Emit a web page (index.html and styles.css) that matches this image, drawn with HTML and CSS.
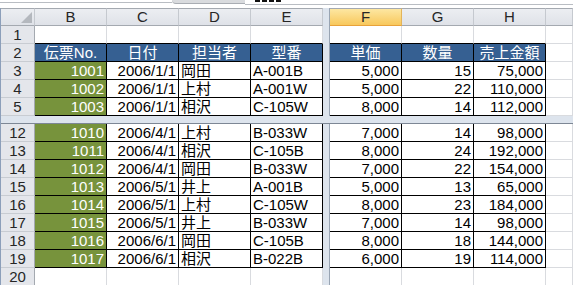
FILE: index.html
```html
<!DOCTYPE html>
<html lang="ja">
<head>
<meta charset="utf-8">
<title>売上表</title>
<link rel="stylesheet" href="styles.css">
</head>
<body>
<div class="fbar">
  <div class="fb-left"></div>
  <div class="fb-fx"></div>
  <div class="fb-input"><span class="mark"></span><span class="mark"></span><span class="mark"></span><span class="mark"></span></div>
</div>
<div class="sheet">
  <div class="vs"></div>
  <div class="hs"></div>

  <div class="ch corner"><span class="tri"></span></div>
  <div class="ch">B</div><div class="ch">C</div><div class="ch">D</div><div class="ch">E</div>
  <div class="ch sel">F</div><div class="ch">G</div><div class="ch">H</div><div class="ch"></div>

  <div class="rh">1</div>
  <div class="c top"></div><div class="c top"></div><div class="c top"></div><div class="c top"></div>
  <div class="c top"></div><div class="c top"></div><div class="c top"></div><div class="c"></div>

  <div class="rh">2</div>
  <div class="c t h">伝票No.</div><div class="c t h">日付</div><div class="c t h">担当者</div><div class="c t h">型番</div>
  <div class="c t h">単価</div><div class="c t h">数量</div><div class="c t h">売上金額</div><div class="c"></div>

  <div class="rh">3</div>
  <div class="c t g">1001</div><div class="c t r">2006/1/1</div><div class="c t">岡田</div><div class="c t">A-001B</div>
  <div class="c t r">5,000</div><div class="c t r">15</div><div class="c t r">75,000</div><div class="c"></div>

  <div class="rh">4</div>
  <div class="c t g">1002</div><div class="c t r">2006/1/1</div><div class="c t">上村</div><div class="c t">A-001W</div>
  <div class="c t r">5,000</div><div class="c t r">22</div><div class="c t r">110,000</div><div class="c"></div>

  <div class="rh">5</div>
  <div class="c t g">1003</div><div class="c t r">2006/1/1</div><div class="c t">相沢</div><div class="c t">C-105W</div>
  <div class="c t r">8,000</div><div class="c t r">14</div><div class="c t r">112,000</div><div class="c"></div>

  <div class="rh">12</div>
  <div class="c t g">1010</div><div class="c t r">2006/4/1</div><div class="c t">上村</div><div class="c t">B-033W</div>
  <div class="c t r">7,000</div><div class="c t r">14</div><div class="c t r">98,000</div><div class="c"></div>

  <div class="rh">13</div>
  <div class="c t g">1011</div><div class="c t r">2006/4/1</div><div class="c t">相沢</div><div class="c t">C-105B</div>
  <div class="c t r">8,000</div><div class="c t r">24</div><div class="c t r">192,000</div><div class="c"></div>

  <div class="rh">14</div>
  <div class="c t g">1012</div><div class="c t r">2006/4/1</div><div class="c t">岡田</div><div class="c t">B-033W</div>
  <div class="c t r">7,000</div><div class="c t r">22</div><div class="c t r">154,000</div><div class="c"></div>

  <div class="rh">15</div>
  <div class="c t g">1013</div><div class="c t r">2006/5/1</div><div class="c t">井上</div><div class="c t">A-001B</div>
  <div class="c t r">5,000</div><div class="c t r">13</div><div class="c t r">65,000</div><div class="c"></div>

  <div class="rh">16</div>
  <div class="c t g">1014</div><div class="c t r">2006/5/1</div><div class="c t">上村</div><div class="c t">C-105W</div>
  <div class="c t r">8,000</div><div class="c t r">23</div><div class="c t r">184,000</div><div class="c"></div>

  <div class="rh">17</div>
  <div class="c t g">1015</div><div class="c t r">2006/5/1</div><div class="c t">井上</div><div class="c t">B-033W</div>
  <div class="c t r">7,000</div><div class="c t r">14</div><div class="c t r">98,000</div><div class="c"></div>

  <div class="rh">18</div>
  <div class="c t g">1016</div><div class="c t r">2006/6/1</div><div class="c t">岡田</div><div class="c t">C-105B</div>
  <div class="c t r">8,000</div><div class="c t r">18</div><div class="c t r">144,000</div><div class="c"></div>

  <div class="rh">19</div>
  <div class="c t g">1017</div><div class="c t r">2006/6/1</div><div class="c t">相沢</div><div class="c t">B-022B</div>
  <div class="c t r">6,000</div><div class="c t r">19</div><div class="c t r">114,000</div><div class="c"></div>

  <div class="rh">20</div>
  <div class="c"></div><div class="c"></div><div class="c"></div><div class="c"></div>
  <div class="c"></div><div class="c"></div><div class="c"></div><div class="c"></div>
</div>
</body>
</html>
```
FILE: styles.css
```css
* { box-sizing: border-box; }
html, body {
  margin: 0;
  padding: 0;
  background: #fff;
  overflow: hidden;
}
body {
  width: 573px;
  height: 285px;
  font-family: "Liberation Sans", "Noto Sans CJK JP", sans-serif;
  font-size: 15px;
}

/* formula bar remnant */
.fbar {
  display: flex;
  height: 8px;
  align-items: flex-start;
}
.fb-left {
  width: 172px;
  height: 3px;
  border-bottom: 1px solid #b9bdc3;
}
.fb-fx {
  width: 73px;
  height: 4px;
  background: #d9dbde;
  border-bottom: 1px solid #a9adb3;
  border-bottom-left-radius: 7px;
}
.fb-input {
  flex: 1;
  height: 5px;
  border-bottom: 1px solid #b9bdc3;
  padding-left: 10px;
  display: flex;
  gap: 2px;
  align-items: flex-start;
}
.mark {
  width: 5px;
  height: 2px;
  background: #111;
}

/* sheet grid */
.sheet {
  display: grid;
  grid-template-columns: 34px 72px 72px 72px 72px 7px 72px 72px 72px 1fr;
  grid-template-rows: repeat(6, 18px) 8px repeat(9, 18px);
  border-left: 1px solid #8c9fba;
}
.c {
  border-right: 1px solid #d9dbdf;
  border-bottom: 1px solid #d9dbdf;
  line-height: 17px;
  white-space: nowrap;
  overflow: hidden;
  padding: 0 2px;
  color: #000;
}
.c.top { border-bottom-color: #000; }
.t {
  border-right-color: #000;
  border-bottom-color: #000;
}
.h {
  background: #366092;
  color: #fff;
  text-align: center;
}
.g {
  background: #77933c;
  color: #fff;
  text-align: right;
}
.r { text-align: right; }

/* headers */
.ch {
  background: linear-gradient(#eceef2, #dfe2e8);
  border-top: 1px solid #a4a9b0;
  border-right: 1px solid #c5c9cf;
  border-bottom: 1px solid #a4a9b0;
  text-align: center;
  line-height: 16px;
  color: #262626;
  font-family: "Liberation Sans", sans-serif;
  font-size: 15px;
}
.ch.sel {
  background: linear-gradient(#fde7a2, #f8c85c);
  border-bottom-color: #e8a23a;
  border-right-color: #e3b45a;
}
.corner {
  display: flex;
  justify-content: flex-end;
  align-items: flex-end;
  padding: 0 2px 2px 0;
}
.tri {
  width: 11px;
  height: 11px;
  background: #b4b8be;
  clip-path: polygon(100% 0, 100% 100%, 0 100%);
}
.rh {
  background: #e4e6eb;
  border-right: 1px solid #a4a9b0;
  border-bottom: 1px solid #c8ccd2;
  text-align: center;
  line-height: 17px;
  color: #262626;
  font-family: "Liberation Sans", sans-serif;
  font-size: 15px;
}

/* split bars */
.vs {
  grid-column: 6;
  grid-row: 1 / -1;
  background: #dde4ed;
  border-right: 1px solid #98a4b3;
}
.hs {
  grid-column: 1 / -1;
  grid-row: 7;
  background: #dde4ed;
  border-bottom: 1px solid #7d8795;
}
```
